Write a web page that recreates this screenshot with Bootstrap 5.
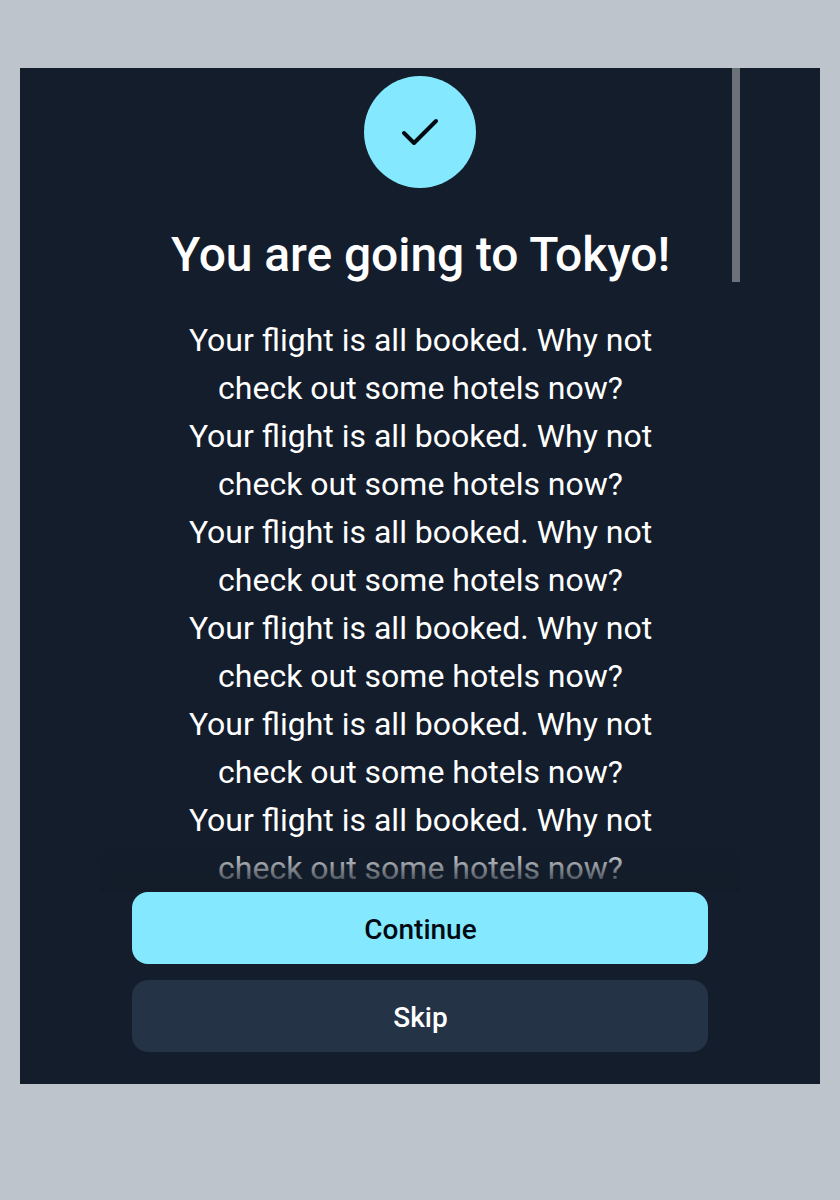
<!DOCTYPE html>
<html lang="en">
<head>
<meta charset="utf-8">
<meta name="viewport" content="width=device-width, initial-scale=1">
<title>Booking confirmed</title>
<link href="https://cdn.jsdelivr.net/npm/bootstrap@5.3.0/dist/css/bootstrap.min.css" rel="stylesheet">
<style>
body{background:#bdc4cb;font-family:Roboto,sans-serif;padding:68px 20px 0;color:#fff}
.modal-panel{height:1016px;background:#141d2b;padding:0 80px 32px}
.scroll-area{height:824px;padding:8px 64px 0}
.check-circle{width:112px;height:112px;background:#84e9ff}
.dialog-title{font-size:48px;line-height:56px;font-weight:500;margin:39px 0 33px;letter-spacing:-.09px;padding-left:1px}
.dialog-copy{font-size:32px;line-height:48px;padding-left:1px}
.scroll-thumb{width:8px;height:214px;background:#6b7079}
.fade-edge{height:48px;background:linear-gradient(to bottom,#121c2900,#121c29)}
.action{height:72px;border:0;border-radius:16px;font-size:28px;font-weight:500;line-height:40px;padding:18px 0 14px 1px}
.action-main,.action-main:hover{background:#84e9ff;color:#010913}
.action-alt,.action-alt:hover{background:#243346;color:#fff}
</style>
</head>
<body>
<main class="modal-panel d-flex flex-column">
  <section class="scroll-area position-relative overflow-hidden text-center flex-shrink-0">
    <div class="check-circle rounded-circle mx-auto d-flex align-items-center justify-content-center">
      <svg width="48" height="48" viewBox="0 0 48 48" fill="none" stroke="#010913" stroke-width="4" stroke-linecap="round" stroke-linejoin="round"><path d="M8 25l10 10 22-22"/></svg>
    </div>
    <h1 class="dialog-title text-nowrap">You are going to Tokyo!</h1>
    <p class="dialog-copy mb-0">Your flight is all booked. Why not<br>check out some hotels now?<br>Your flight is all booked. Why not<br>check out some hotels now?<br>Your flight is all booked. Why not<br>check out some hotels now?<br>Your flight is all booked. Why not<br>check out some hotels now?<br>Your flight is all booked. Why not<br>check out some hotels now?<br>Your flight is all booked. Why not<br>check out some hotels now?</p>
    <div class="fade-edge position-absolute bottom-0 start-0 end-0"></div>
    <div class="scroll-thumb position-absolute top-0 end-0"></div>
  </section>
  <div class="d-grid gap-3 px-4 mx-2">
    <button class="btn action action-main">Continue</button>
    <button class="btn action action-alt">Skip</button>
  </div>
</main>
<script src="https://cdn.jsdelivr.net/npm/bootstrap@5.3.0/dist/js/bootstrap.bundle.min.js"></script>
</body>
</html>
